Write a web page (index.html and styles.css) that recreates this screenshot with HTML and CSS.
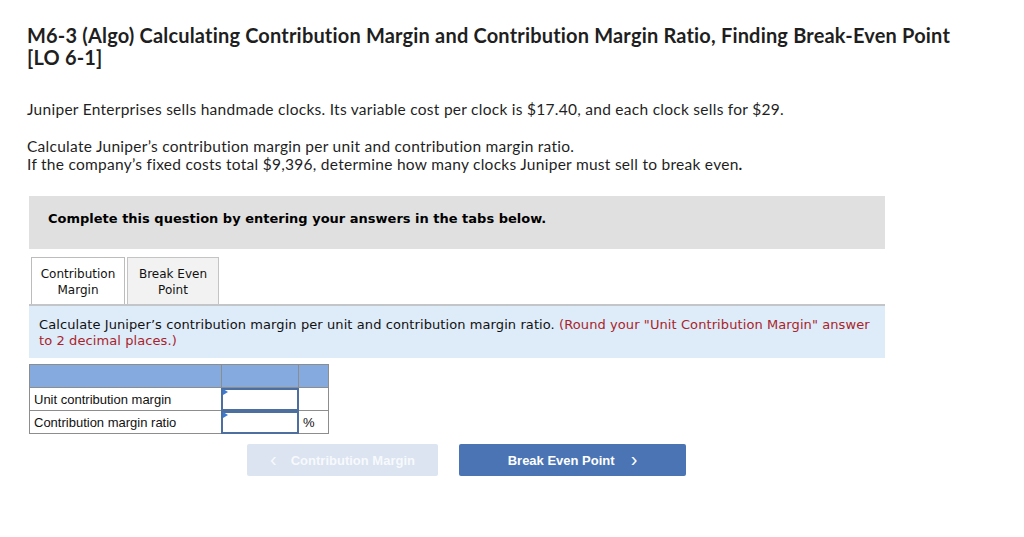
FILE: index.html
```html
<!DOCTYPE html>
<html>
<head>
<meta charset="utf-8">
<link rel="stylesheet" href="styles.css">
</head>
<body>
<div class="page">
  <h1 class="title">M6-3 (Algo) Calculating Contribution Margin and Contribution Margin Ratio, Finding Break-Even Point [LO 6-1]</h1>
  <p class="intro">Juniper Enterprises sells handmade clocks. Its variable cost per clock is $17.40, and each clock sells for $29.</p>
  <p class="task">Calculate Juniper’s contribution margin per unit and contribution margin ratio.<br>If the company’s fixed costs total $9,396, determine how many clocks Juniper must sell to break even<b>.</b></p>

  <div class="notice">Complete this question by entering your answers in the tabs below.</div>

  <div class="tabs">
    <div class="tab active">Contribution<br>Margin</div>
    <div class="tab">Break Even<br>Point</div>
  </div>
  <div class="instr">Calculate Juniper’s contribution margin per unit and contribution margin ratio. <span class="red">(Round your "Unit Contribution Margin" answer to 2 decimal places.)</span></div>

  <table class="grid">
    <tr class="head"><td class="c1"></td><td class="c2"></td><td class="c3"></td></tr>
    <tr><td class="c1">Unit contribution margin</td><td class="c2 inp"><span class="field"></span></td><td class="c3"></td></tr>
    <tr><td class="c1">Contribution margin ratio</td><td class="c2 inp"><span class="field"></span></td><td class="c3">%</td></tr>
  </table>

  <div class="nav">
    <div class="btn prev"><span class="chev">&lsaquo;</span>Contribution Margin</div>
    <div class="btn next">Break Even Point<span class="chev r">&rsaquo;</span></div>
  </div>
</div>
</body>
</html>
```
FILE: styles.css
```css
html, body { margin: 0; padding: 0; background: #fff; }
.page { padding: 24px 0 0 27px; width: 960px; }
.title {
  font-family: "Lato", "Liberation Sans", sans-serif;
  font-weight: 700;
  font-size: 20px;
  letter-spacing: 0.18px;
  line-height: 22px;
  color: #1f1f1f;
  margin: 0;
  width: 935px;
}
.intro, .task {
  font-family: "Lato", "Liberation Sans", sans-serif;
  font-size: 15.5px;
  letter-spacing: 0.27px;
  line-height: 18px;
  color: #1f1f1f;
  margin: 0;
}
.intro { margin-top: 32px; }
.task { margin-top: 19px; }
.notice {
  margin: 23px 0 0 2px;
  width: 856px;
  height: 53px;
  box-sizing: border-box;
  background: #e0e0e0;
  font-family: "DejaVu Sans", Verdana, sans-serif;
  font-weight: 700;
  font-size: 13px;
  padding: 15px 0 0 19px;
  color: #000;
}
.tabs { display: flex; margin: 8px 0 0 4px; gap: 2px; }
.tab {
  box-sizing: border-box;
  height: 47px;
  border: 1px solid #c4c4c4;
  border-bottom: none;
  background: #f2f2f2;
  font-family: "DejaVu Sans", Verdana, sans-serif;
  font-size: 12px;
  line-height: 16px;
  text-align: center;
  padding-top: 8px;
  color: #111;
}
.tab:first-child { width: 94px; }
.tab:nth-child(2) { width: 92px; }
.tab.active { background: #fff; border-color: #bcbcbc; }
.instr {
  margin-left: 2px;
  width: 856px;
  height: 54px;
  box-sizing: border-box;
  background: #deebf8;
  border-top: 2px solid #c3c6c9;
  padding: 11px 10px 0 10px;
  font-family: "DejaVu Sans", Verdana, sans-serif;
  font-size: 13px;
  letter-spacing: 0.09px;
  line-height: 16px;
  color: #111;
}
.red { color: #a9242a; }
.grid {
  margin: 6px 0 0 2px;
  border-collapse: collapse;
  font-family: "Liberation Sans", Arial, sans-serif;
  font-size: 13px;
  color: #111;
}
.grid td { border: 1px solid #8d8d8d; height: 23px; padding: 0; box-sizing: border-box; }
.grid .c1 { width: 192px; padding-left: 4px; }
.grid .c2 { width: 77px; }
.grid .c3 { width: 30px; padding-left: 4px; }
.grid .head td { background: #84aadf; height: 23px; }
.grid .inp { position: relative; padding: 0; }
.field {
  position: absolute;
  left: -1px;
  right: -1px;
  top: 0;
  bottom: -1px;
  box-sizing: border-box;
  border: 2px solid #4d6f9f;
  background: #fff;
}
.inp::before {
  content: "";
  position: absolute;
  left: 1px;
  top: 1px;
  border-left: 5px solid #3c7bd4;
  border-top: 3px solid transparent;
  border-bottom: 3px solid transparent;
  z-index: 1;
}
.nav { display: flex; gap: 21px; margin: 10px 0 0 220px; }
.btn {
  height: 32px;
  box-sizing: border-box;
  font-family: "Liberation Sans", Arial, sans-serif;
  font-weight: 700;
  font-size: 13px;
  color: #fff;
  display: flex;
  align-items: center;
  justify-content: center;
  border-radius: 2px;
}
.prev { width: 191px; background: #dbe4f0; color: #f7f9fc; }
.next { width: 227px; background: #4a74b4; }
.chev { font-size: 20px; font-weight: 400; margin-right: 14px; line-height: 1; position: relative; top: -1px; }
.chev.r { margin: 0 0 0 16px; }
```
